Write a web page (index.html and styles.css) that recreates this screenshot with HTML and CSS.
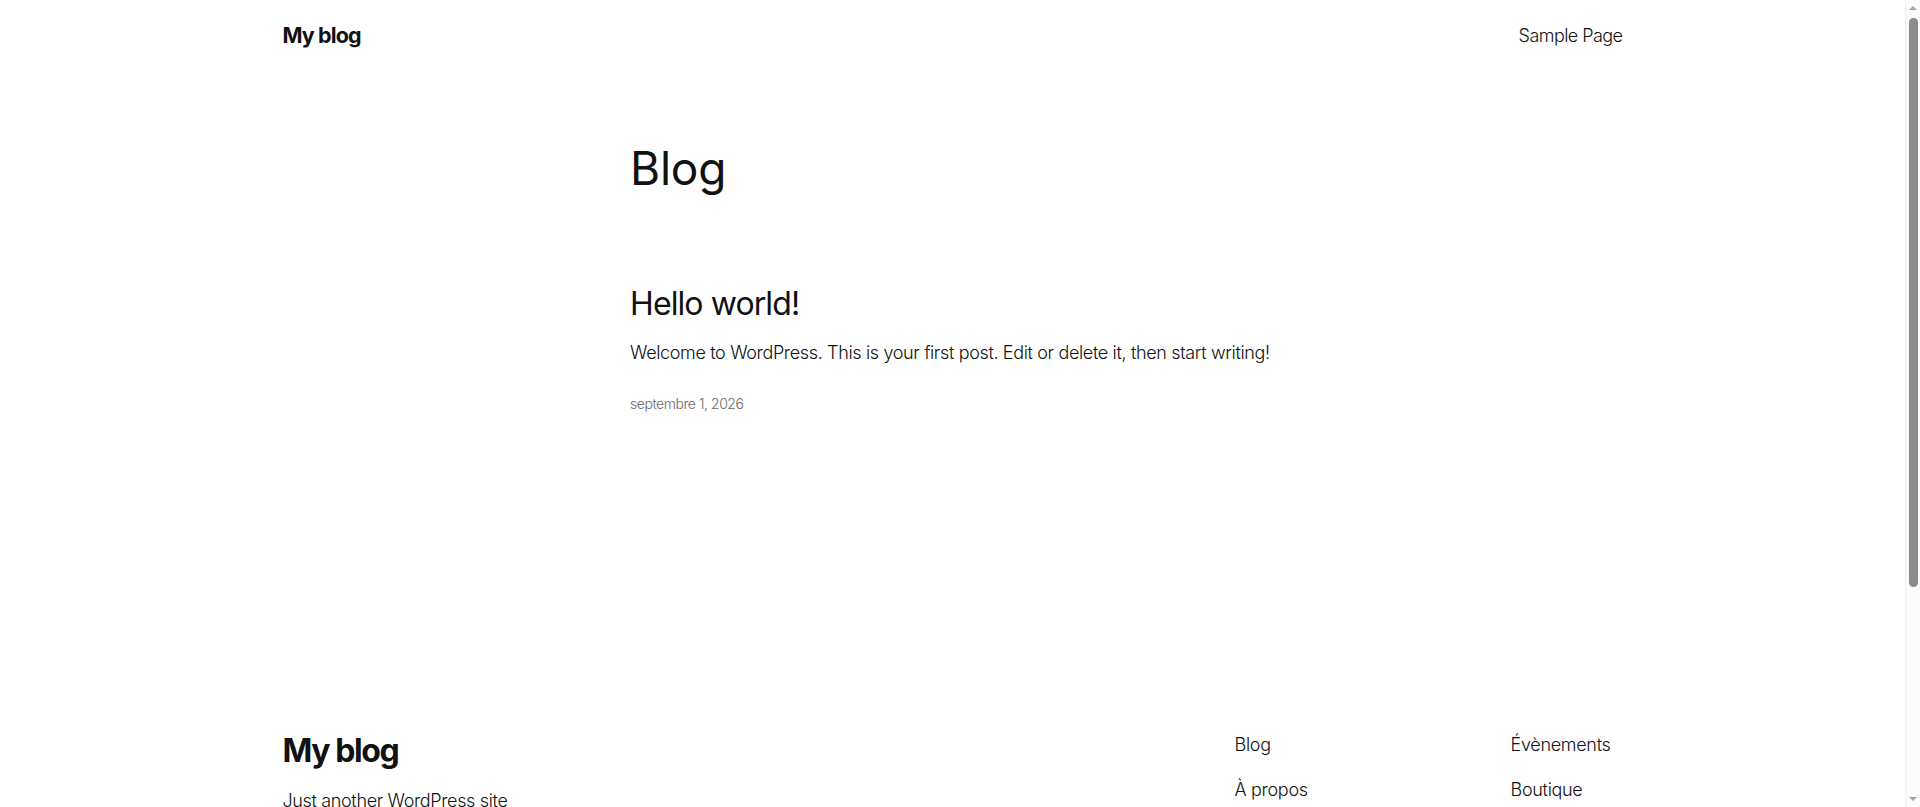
FILE: index.html
```html
<!DOCTYPE html>
<html lang="fr">
<head>
<meta charset="utf-8">
<title>Blog – My blog</title>
<link rel="stylesheet" href="styles.css">
</head>
<body>
<div class="page">
<header class="site-header">
  <div class="wide header-row">
    <a class="site-title" href="#">My blog</a>
    <nav class="header-nav"><a href="#">Sample Page</a></nav>
  </div>
</header>
<main class="site-main">
  <div class="content">
    <h1 class="page-title">Blog</h1>
    <article class="post">
      <h2 class="post-title"><a href="#">Hello world!</a></h2>
      <p class="post-excerpt">Welcome to WordPress. This is your first post. Edit or delete it, then start writing!</p>
      <div class="post-date">septembre 1, 2026</div>
    </article>
  </div>
</main>
<footer class="site-footer">
  <div class="wide footer-row">
    <div class="footer-brand">
      <a class="footer-title" href="#">My blog</a>
      <p class="tagline">Just another WordPress site</p>
    </div>
    <div class="footer-nav">
      <ul class="nav-col">
        <li><a href="#">Blog</a></li>
        <li><a href="#">À propos</a></li>
        <li><a href="#">FAQ</a></li>
        <li><a href="#">Auteurs</a></li>
      </ul>
      <ul class="nav-col">
        <li><a href="#">Évènements</a></li>
        <li><a href="#">Boutique</a></li>
        <li><a href="#">Compositions</a></li>
        <li><a href="#">Thèmes</a></li>
      </ul>
    </div>
  </div>
  <div class="wide footer-bottom">
    <span>Twenty Twenty-Five</span>
    <span>Conçu avec <a href="#">WordPress</a></span>
  </div>
</footer>
</div>
<div class="scrollbar" aria-hidden="true">
  <span class="arrow arrow-up"></span>
  <span class="thumb"></span>
  <span class="arrow arrow-down"></span>
</div>
</body>
</html>
```
FILE: styles.css
```css
html, body {
  margin: 0;
  padding: 0;
  background: #ffffff;
}
html {
  overflow: hidden;
}
body {
  font-family: Inter, "Noto Sans", "Liberation Sans", sans-serif;
  font-weight: 300;
  color: #111111;
  font-size: 18px;
  line-height: 1.4;
  letter-spacing: -0.1px;
}
.page {
  margin-right: 15px;
}
a {
  color: inherit;
  text-decoration: none;
}
.wide {
  max-width: 1340px;
  margin: 0 auto;
}
.site-header {
  padding: 20px 0;
}
.header-row {
  display: flex;
  align-items: center;
  justify-content: space-between;
}
.site-title {
  font-size: 21.5px;
  line-height: 30.8px;
  font-weight: 700;
  letter-spacing: -0.9px;
}
.header-nav {
  font-size: 18px;
  line-height: 1.4;
  letter-spacing: -0.55px;
}
.site-main {
  padding-top: 72px;
}
.content {
  width: 645px;
  margin: 0 auto;
}
.page-title {
  margin: 0;
  font-size: 46px;
  line-height: 50px;
  font-weight: 400;
  letter-spacing: -0.2px;
}
.post {
  margin-top: 93px;
}
.post-title {
  margin: 0;
  font-size: 32px;
  line-height: 1.125;
  font-weight: 400;
  letter-spacing: -0.9px;
}
.post-excerpt {
  margin: 18.5px 0 0;
  font-size: 18px;
  line-height: 1.4;
  letter-spacing: -0.35px;
}
.post-date {
  margin-top: 28.5px;
  font-size: 14px;
  line-height: 1.4;
  color: #686868;
  letter-spacing: -0.45px;
}
.site-footer {
  margin-top: 318.5px;
  padding-bottom: 60px;
}
.footer-row {
  display: flex;
  justify-content: space-between;
  align-items: flex-start;
}
.footer-brand {
  display: flex;
  flex-direction: column;
}
.footer-title {
  font-size: 32px;
  line-height: 37px;
  font-weight: 700;
  letter-spacing: -1.4px;
}
.tagline {
  margin: 18.5px 0 0;
  font-size: 18px;
  line-height: 1.4;
  letter-spacing: -0.35px;
}
.footer-nav {
  display: grid;
  grid-template-columns: 236px 112px;
  column-gap: 40px;
}
.nav-col {
  list-style: none;
  margin: 0;
  padding: 0;
  display: flex;
  flex-direction: column;
  gap: 19.8px;
  font-size: 18px;
  line-height: 1.4;
  letter-spacing: -0.3px;
}
.footer-bottom {
  margin-top: 120px;
  display: flex;
  justify-content: space-between;
  font-size: 14px;
}
.scrollbar {
  position: fixed;
  top: 0;
  right: 0;
  width: 15px;
  height: 100%;
  background: #fbfbfb;
  border-left: 1px solid #f0f0f0;
  box-sizing: border-box;
}
.thumb {
  position: absolute;
  top: 18px;
  left: 3px;
  width: 9px;
  height: 569px;
  border-radius: 5px;
  background: #8b8b8b;
}
.arrow {
  position: absolute;
  left: 3px;
  width: 0;
  height: 0;
  border-left: 4px solid transparent;
  border-right: 4px solid transparent;
}
.arrow-up {
  top: 6px;
  border-bottom: 4px solid #a3a3a3;
}
.arrow-down {
  bottom: 6px;
  border-top: 4px solid #a3a3a3;
}
```
